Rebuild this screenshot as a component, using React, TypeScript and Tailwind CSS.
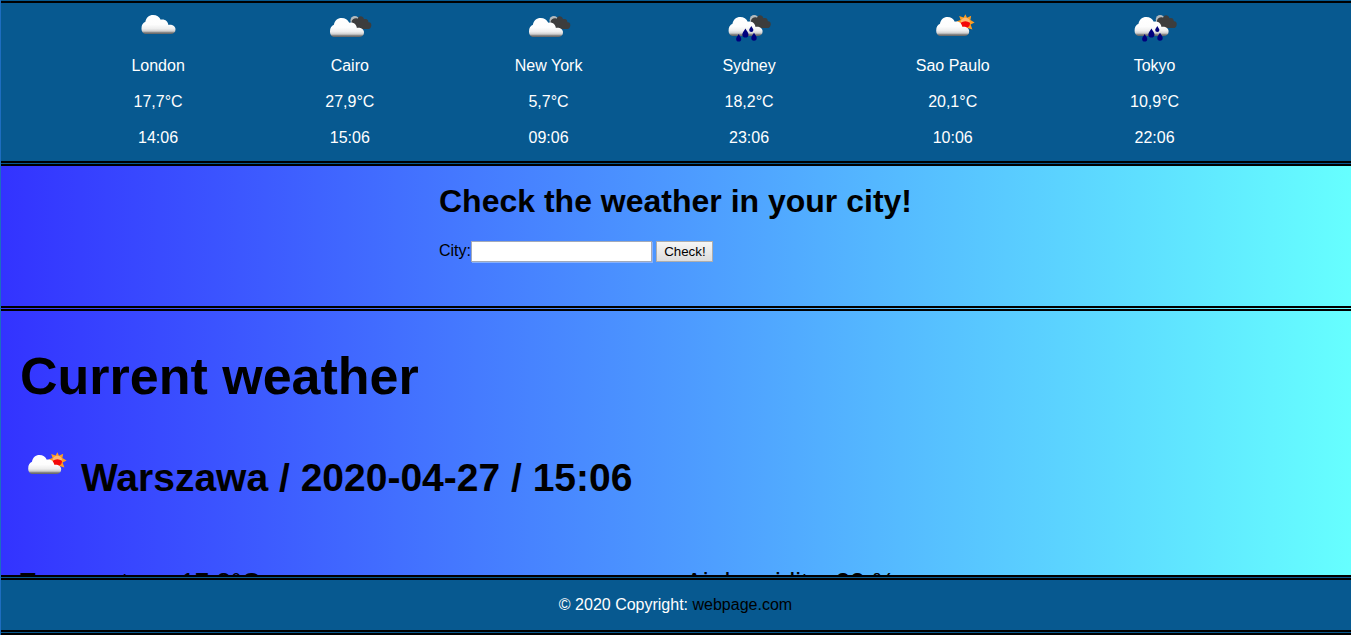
import React from "react";

type Kind = "cloud" | "cloudy" | "rain" | "sunny";

const CLOUD =
  "M5 19C2 19 0 17 0 13.4C0 10 1.4 7.8 3.9 6.8C4.6 2.6 7.6 0 11.6 0C15.2 0 17.9 1.8 19.2 4.8C23.2 3.8 26.3 6.2 26.9 9.9C31 9.4 34 11.2 34 14.4C34 17.2 32 19 29 19Z";

const CLOUD_POSITION: Record<Kind, string> = {
  cloud: "translate(8.5 10)",
  cloudy: "translate(5 13)",
  rain: "translate(4.6 12)",
  sunny: "translate(8.2 12) scale(.97 1)",
};

const DROP = "M0 -4C1.2 -1.8 2.7 -0.4 2.7 1.3A2.7 2.7 0 0 1 -2.7 1.3C-2.7 -0.4 -1.2 -1.8 0 -4Z";

function WeatherIcon({ kind, id }: { kind: Kind; id: string }) {
  const fill = `cloud-${id}`;
  const dark = kind === "cloudy" || kind === "rain";
  return (
    <svg width="50" height="40" viewBox="0 0 50 40" className="block shrink-0">
      <defs>
        <linearGradient id={fill} x1="0" y1="0" x2="0" y2="1">
          <stop offset="0" stopColor="#ffffff" />
          <stop offset="0.5" stopColor="#fdfdfd" />
          <stop offset="0.72" stopColor="#eeeeee" />
          <stop offset="0.85" stopColor="#cfcfcf" />
          <stop offset="0.91" stopColor="#8c8c8c" />
          <stop offset="1" stopColor="#606060" />
        </linearGradient>
      </defs>
      {dark && (
        <g transform={kind === "rain" ? "translate(.4 -1)" : undefined}>
          <circle cx="29.8" cy="15.4" r="4.4" fill="#b4babd" />
          <path
            d="M26.4 17.4C27 13.8 30.4 12.6 32.6 13.8C33.6 10.6 38 10.4 39 14.2C42 13.2 43.4 15 43.4 17.2C45.8 17 46.8 19 46.2 21.2C45.8 23.2 44.4 24 42.8 24H30Z"
            fill="#3d3d3d"
          />
        </g>
      )}
      {kind === "sunny" && (
        <g>
          <path
            d="M37.4 9.2L39 12.8L43.2 10.8L42.4 15L46.6 17.4L42.6 19.6L44.4 24.4L39.6 23L37.6 26L35 23L31 22L32 18L28.4 16.4L32.6 15L31.2 11L35.6 12.6Z"
            fill="#ff9d20"
          />
          <circle cx="37.4" cy="17.4" r="4.7" fill="#ffb870" />
          <path d="M32.6 17.8Q37.4 14.6 42 17.8Q42 22.4 38 23Q33.2 22.8 32.6 17.8Z" fill="#f40808" />
        </g>
      )}
      <path d={CLOUD} transform={CLOUD_POSITION[kind]} fill={`url(#${fill})`} />
      {kind === "rain" && (
        <g fill="#00007d">
          <path d={DROP} transform="translate(14.7 32.8) scale(.95)" />
          <path d={DROP} transform="translate(21.4 28) scale(1.15)" />
          <path d={DROP} transform="translate(27.3 24) scale(.78)" />
          <path d={DROP} transform="translate(30 31.8)" />
        </g>
      )}
    </svg>
  );
}

const cities: { name: string; temp: string; time: string; kind: Kind }[] = [
  { name: "London", temp: "17,7°C", time: "14:06", kind: "cloud" },
  { name: "Cairo", temp: "27,9°C", time: "15:06", kind: "cloudy" },
  { name: "New York", temp: "5,7°C", time: "09:06", kind: "cloudy" },
  { name: "Sydney", temp: "18,2°C", time: "23:06", kind: "rain" },
  { name: "Sao Paulo", temp: "20,1°C", time: "10:06", kind: "sunny" },
  { name: "Tokyo", temp: "10,9°C", time: "22:06", kind: "rain" },
];

export default function App() {
  return (
    <div className="h-[635px] w-full overflow-hidden border-l border-[#1d6dc0] font-['Liberation_Sans',Arial,sans-serif] text-base leading-5 text-black">
      <div className="flex h-full flex-col bg-[linear-gradient(to_right,#3333ff,#66ffff)]">
        <header className="-mt-0.5 flex h-[168px] shrink-0 gap-[140px] border-y-[5px] border-double border-black bg-[#075990] pt-0.5 pl-[130.4px] text-white">
          {cities.map((city) => (
            <div key={city.name} className="flex shrink-0 flex-col items-center whitespace-nowrap">
              <WeatherIcon kind={city.kind} id={city.name.replace(" ", "")} />
              <p className="mt-[11px]">{city.name}</p>
              <p className="mt-4">{city.temp}</p>
              <p className="mt-4">{city.time}</p>
            </div>
          ))}
        </header>

        <section className="flex h-[145px] shrink-0 justify-center border-b-[5px] border-double border-black pr-px">
          <div className="pt-[17px]">
            <h1 className="text-[32px] leading-9 font-bold">Check the weather in your city!</h1>
            <form className="mt-[22px] flex items-start" onSubmit={(e) => e.preventDefault()}>
              <label htmlFor="city" className="leading-[19px]">City:</label>
              <input
                id="city"
                className="h-[21px] w-[181px] border border-[#a3aab8] bg-white px-1 text-[13.33px] shadow-[1px_1px_0_#86b1ff] outline-none"
              />
              <button className="ml-[4.4px] h-[21px] w-[57px] border border-[#adadad] bg-linear-to-b from-[#f6f6f6] to-[#dddddd] text-[13.33px] leading-[19px]">
                Check!
              </button>
            </form>
          </div>
        </section>

        <main className="h-[264px] shrink-0 overflow-hidden pl-[19px]">
          <h1 className="mt-[35px] text-[52px] leading-[60px] font-bold">Current weather</h1>
          <div className="mt-[37px] flex items-start">
            <WeatherIcon kind="sunny" id="current" />
            <h2 className="mt-3 ml-[11px] text-[39px] leading-[45px] font-bold">
              Warszawa / 2020-04-27 / 15:06
            </h2>
          </div>
          <div className="mt-[67px] grid grid-cols-2 text-[26px] leading-[30px]">
            <p>Temperature: 17,8°C</p>
            <p>Air humidity: 33 %</p>
          </div>
        </main>

        <footer className="flex h-[60px] shrink-0 items-center justify-center border-y-[5px] border-double border-black bg-[#075990] pr-px text-white">
          <p>
            © 2020 Copyright: <a className="text-black">webpage.com</a>
          </p>
        </footer>
      </div>
    </div>
  );
}
